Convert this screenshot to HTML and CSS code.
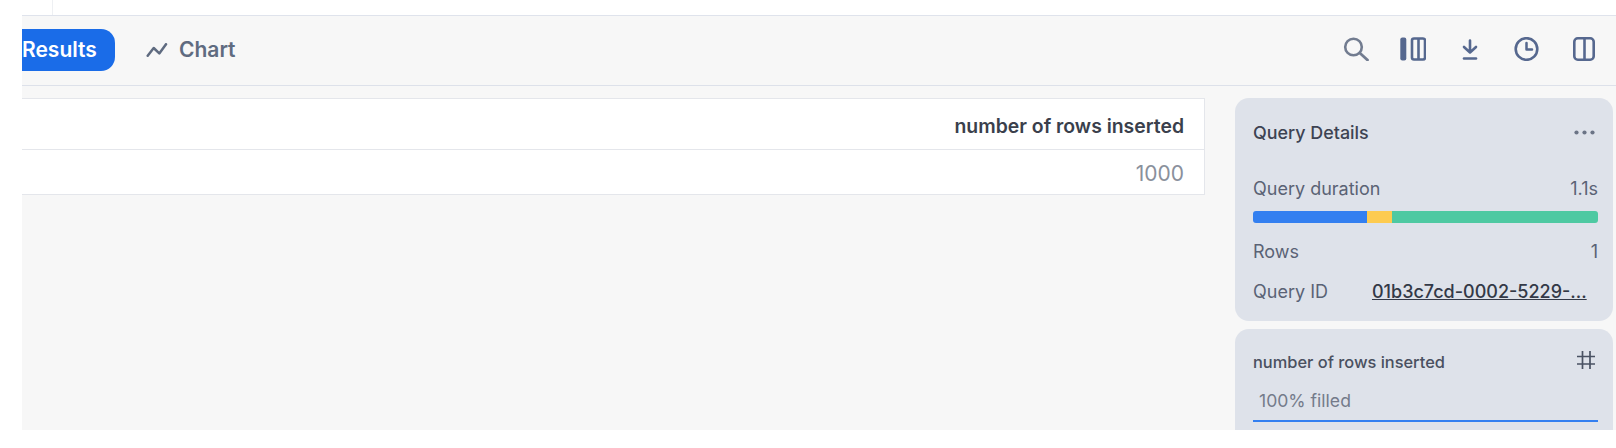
FILE: index.html
```html
<!DOCTYPE html>
<html lang="en">
<head>
<meta charset="utf-8">
<title>Results</title>
<link rel="stylesheet" href="styles.css">
</head>
<body>
<div class="topstrip"><div class="topline"></div></div>
<main class="main">
  <header class="toolbar">
    <div class="tabs">
      <button class="tab tab-active"><span class="tab-text">Results</span></button>
      <button class="tab tab-plain">
        <svg class="chart-icon" width="22" height="15" viewBox="0 0 22 15" fill="none"><path d="M1.7 12.7 L7.7 5 L13.3 10.4 L20 1.2" stroke="#5f6b80" stroke-width="2.5" stroke-linejoin="round" stroke-linecap="round"/></svg>
        <span class="tab-text">Chart</span>
      </button>
    </div>
    <div class="tools">
      <svg class="tool-search" width="26" height="24" viewBox="0 0 26 24" fill="none"><circle cx="10.5" cy="10" r="8.3" stroke="#727c90" stroke-width="2.6"/><path d="M16.8 16 L24.5 23" stroke="#727c90" stroke-width="2.8" stroke-linecap="round"/></svg>
      <svg class="tool-cols" width="26" height="24" viewBox="0 0 26 24" fill="none"><rect x="0.3" y="0.5" width="6" height="23" rx="2" fill="#56688f"/><rect x="12" y="1.5" width="13" height="21" rx="2" stroke="#56688f" stroke-width="2.6"/><path d="M18.5 1.5 V22.5" stroke="#56688f" stroke-width="2.6"/></svg>
      <svg class="tool-dl" width="16" height="21" viewBox="0 0 16 21" fill="none"><path d="M8 1.5 V12.5 M2 8 L8 13.5 L14 8" stroke="#56688f" stroke-width="2.6" stroke-linecap="round" stroke-linejoin="round"/><path d="M2 19.5 H14" stroke="#56688f" stroke-width="2.6" stroke-linecap="round"/></svg>
      <svg class="tool-clock" width="25" height="24" viewBox="0 0 25 24" fill="none"><circle cx="12.5" cy="12" r="10.8" stroke="#56688f" stroke-width="2.6"/><path d="M12.5 6 V12.5 H18" stroke="#56688f" stroke-width="2.5" stroke-linecap="round" stroke-linejoin="round"/></svg>
      <svg class="tool-panel" width="22" height="24" viewBox="0 0 22 24" fill="none"><rect x="1.3" y="1.3" width="19.4" height="21.4" rx="3.5" stroke="#56688f" stroke-width="2.6"/><path d="M11.5 1.5 V22.5" stroke="#56688f" stroke-width="2.6"/></svg>
    </div>
  </header>
  <section class="content">
    <div class="table">
      <div class="table-head">number of rows inserted</div>
      <div class="table-row">1000</div>
    </div>
    <aside class="side">
      <div class="card card-details">
        <div class="card-title">
          <span>Query Details</span>
          <svg class="dots" width="21" height="5" viewBox="0 0 21 5"><circle cx="2.5" cy="2.5" r="2.1" fill="#6b7486"/><circle cx="10.5" cy="2.5" r="2.1" fill="#6b7486"/><circle cx="18.5" cy="2.5" r="2.1" fill="#6b7486"/></svg>
        </div>
        <div class="row row-duration"><span>Query duration</span><span>1.1s</span></div>
        <div class="bar"><div class="bar-blue"></div><div class="bar-yellow"></div><div class="bar-green"></div></div>
        <div class="row row-rows"><span>Rows</span><span>1</span></div>
        <div class="row row-id"><span>Query ID</span><a class="qid">01b3c7cd-0002-5229-...</a></div>
      </div>
      <div class="card card-col">
        <div class="col-title">
          <span>number of rows inserted</span>
          <svg class="hash" width="20" height="20" viewBox="0 0 20 20" fill="none"><path d="M6.5 1 V19 M14 1 V19 M1 6.5 H19 M1 14 H19" stroke="#4a5263" stroke-width="1.7"/></svg>
        </div>
        <div class="filled">100% filled</div>
        <div class="filled-line"></div>
      </div>
    </aside>
  </section>
</main>
</body>
</html>
```
FILE: styles.css
```css
* { box-sizing: border-box; }
html, body { margin: 0; padding: 0; }
body {
  width: 1616px;
  height: 448px;
  overflow: hidden;
  background: #fff;
  font-family: "Inter", "Liberation Sans", sans-serif;
  color: #5f6b80;
}
.topstrip { height: 15px; padding-left: 52px; }
.topline { width: 1px; height: 15px; background: #eef0f3; }
.main {
  margin-left: 22px;
  height: 415px;
  background: #f7f7f7;
  border-top: 1.5px solid #dfe3ec;
  overflow: hidden;
}
.toolbar {
  height: 69.5px;
  display: flex;
  align-items: center;
  justify-content: space-between;
  padding-right: 21px;
  border-bottom: 1.5px solid #dde1ea;
}
.tabs { display: flex; align-items: center; }
.tab {
  font-family: inherit;
  font-size: 21px;
  font-weight: 600;
  border: 0;
  background: none;
  padding: 0;
  display: flex;
  align-items: center;
}
.tab-text { padding-bottom: 2px; }
.tab-active {
  margin-left: -20px;
  width: 113px;
  height: 42px;
  padding-left: 20px;
  border-radius: 14px;
  background: #1a6ce8;
  color: #fff;
}
.tab-plain { margin-left: 30px; color: #5f6b80; gap: 11px; }
.chart-icon { margin-left: 1px; }
.tools { display: flex; align-items: center; gap: 31px; margin-top: -2px; }
.tool-dl { margin-left: 5px; margin-right: 5px; }
.tool-panel { margin-left: 3px; }
.content { display: flex; padding-top: 12px; }
.table {
  width: 1183px;
  height: 97px;
  background: #fff;
  border: 1.5px solid #e4e6eb;
  border-left: 0;
  flex: none;
}
.table-head {
  height: 51px;
  padding-top: 4px;
  display: flex;
  align-items: center;
  justify-content: flex-end;
  padding-right: 20px;
  font-size: 19.4px;
  font-weight: 600;
  color: #3a3f4c;
  border-bottom: 1.5px solid #e4e6eb;
}
.table-row {
  height: 43px;
  padding-top: 4px;
  display: flex;
  align-items: center;
  justify-content: flex-end;
  padding-right: 20px;
  font-size: 21px;
  color: #8a909c;
}
.side { margin-left: 30px; width: 378px; flex: none; display: flex; flex-direction: column; gap: 8px; }
.card { background: #dee2ea; border-radius: 14px; padding: 0 15px 0 18px; }
.card-details { height: 223px; }
.card-col { height: 120px; border-radius: 14px 14px 0 0; }
.card-title {
  display: flex;
  justify-content: space-between;
  align-items: center;
  padding-top: 24px;
  font-size: 17.9px;
  font-weight: 450;
  color: #3d4352;
  height: 46px;
}
.dots { margin-right: 3px; }
.row {
  display: flex;
  justify-content: space-between;
  align-items: center;
  font-size: 18px;
  color: #5a6275;
}
.row-duration { margin-top: 33px; height: 24px; }
.bar { display: flex; height: 12px; margin-top: 10px; border-radius: 3px; overflow: hidden; }
.bar-blue { width: 114px; background: #337ff0; }
.bar-yellow { width: 25px; background: #fdcb50; }
.bar-green { flex: 1; background: #4ec9a2; }
.row-rows { margin-top: 17px; height: 24px; }
.row-id { margin-top: 16px; height: 24px; justify-content: flex-start; }
.qid {
  margin-left: 44px;
  color: #333947;
  text-decoration: underline;
  font-weight: 500;
  white-space: nowrap;
  font-size: 18px;
}
.col-title {
  display: flex;
  justify-content: space-between;
  align-items: center;
  padding-top: 20px;
  height: 46px;
  font-size: 16.4px;
  font-weight: 450;
  color: #4a5060;
}
.hash { margin-top: -4px; margin-right: 2px; }
.filled { margin-top: 14px; padding-left: 6px; font-size: 17.6px; color: #747b8a; line-height: 24px; }
.filled-line { margin-top: 7.5px; height: 2px; background: #337ff0; }
```
